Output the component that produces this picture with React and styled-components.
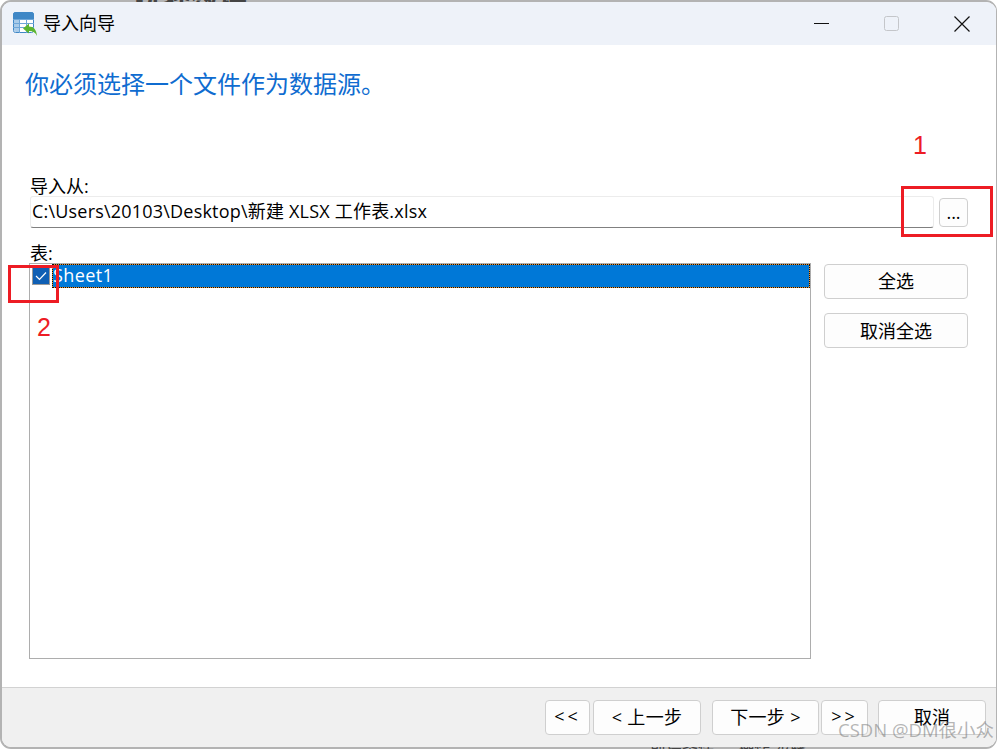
import React from "react";
import styled, { createGlobalStyle } from "styled-components";

const GlobalStyle = createGlobalStyle`
	html, body {
		margin: 0;
		padding: 0;
		background: #fff;
	}
	body {
		font-family: "Open Sans", "Noto Sans CJK SC", sans-serif;
		color: #000;
	}
`;

const Page = styled.div`
	position: relative;
	width: 998px;
	height: 749px;
	overflow: hidden;
	background: #fff;
	padding-right: 1px;
	box-sizing: border-box;
`;

// strips of the page behind the dialog, only a sliver of its text shows
const BehindStrip = styled.div`
	position: absolute;
	left: ${(props) => props.$left}px;
	top: ${(props) => props.$top}px;
	height: 2px;
	overflow: hidden;
	white-space: nowrap;
	font-size: ${(props) => props.$size}px;
	line-height: 2px;
	font-weight: ${(props) => props.$weight};
	color: #444;
`;

const Window = styled.div`
	position: relative;
	height: 749px;
	box-sizing: border-box;
	border: 2px solid #b3b3b3;
	border-right-width: 1px;
	border-radius: 11px;
	background: #fff;
	overflow: hidden;
	display: flex;
	flex-direction: column;
`;

const TitleBar = styled.div`
	height: 43px;
	flex: none;
	background: #eef2f9;
	display: flex;
	align-items: center;
	padding-left: 11px;
`;

const TitleText = styled.span`
	margin-left: 6px;
	font-size: 18px;
	line-height: 43px;
`;

const Controls = styled.div`
	margin-left: auto;
	display: flex;
	align-items: center;
	padding-right: 26px;
	gap: 55px;
`;

const Body = styled.div`
	flex: 1;
	display: flex;
	flex-direction: column;
	padding: 0 28px;
	min-height: 0;
`;

const Heading = styled.h1`
	margin: 22px 0 0 -5px;
	font-size: 24px;
	line-height: 34px;
	font-weight: 400;
	color: #0f6cd0;
`;

const Label = styled.div`
	font-size: 18px;
	line-height: 20px;
`;

const SourceLabel = styled(Label)`
	margin-top: 75px;
`;

const TableLabel = styled(Label)`
	margin-top: 15px;
`;

const FileRow = styled.div`
	display: flex;
	align-items: center;
	gap: 5px;
`;

const FileInput = styled.div`
	flex: 1;
	height: 32px;
	box-sizing: border-box;
	border: 1px solid #ececec;
	border-bottom: 1px solid #808080;
	border-radius: 3px;
	padding-left: 1px;
	font-size: 18px;
	line-height: 29px;
	letter-spacing: 0.2px;
	white-space: nowrap;
`;

const Button = styled.div`
	box-sizing: border-box;
	width: ${(props) => props.$width}px;
	height: ${(props) => props.$height || 35}px;
	flex: none;
	border: 1px solid #cfcfcf;
	border-radius: 4px;
	background: #fdfdfd;
	padding-bottom: ${(props) => props.$lift || 0}px;
	display: flex;
	align-items: center;
	justify-content: center;
	font-size: 18px;
	white-space: pre;
	letter-spacing: ${(props) => props.$spacing || 0}px;
`;

const TableArea = styled.div`
	display: flex;
	align-items: flex-start;
	gap: 13px;
	margin-left: -1px;
`;

const SheetList = styled.div`
	width: 782px;
	height: 396px;
	box-sizing: border-box;
	border: 1px solid #adadad;
`;

const SheetRow = styled.div`
	display: flex;
	align-items: flex-start;
	height: 24px;
`;

const CheckBox = styled.div`
	width: 18px;
	height: 18px;
	margin: 3px 0 0 2px;
	flex: none;
	box-sizing: border-box;
	border: 1px solid #9a9a9a;
	background: #0f5fb4;
	display: flex;
	align-items: center;
	justify-content: center;
`;

const SheetName = styled.div`
	flex: 1;
	margin-left: 2px;
	height: 24px;
	box-sizing: border-box;
	border: 1px dotted #111;
	background: linear-gradient(#0078d7, #0078d7) padding-box, #e8912d border-box;
	color: #fff;
	font-size: 18px;
	line-height: 21px;
	letter-spacing: 0.4px;
`;

const SideButtons = styled.div`
	display: flex;
	flex-direction: column;
	gap: 14px;
	padding-top: 1px;
`;

const Footer = styled.div`
	height: 60px;
	flex: none;
	box-sizing: border-box;
	background: #f0f0f0;
	border-top: 1px solid #d2d2d2;
	display: flex;
	align-items: flex-start;
	justify-content: flex-end;
	padding: 12px 10px 0 0;
`;

const FooterButton = styled(Button)`
	margin-left: ${(props) => props.$gap}px;
`;

const RedBox = styled.div`
	position: absolute;
	left: ${(props) => props.$left}px;
	top: ${(props) => props.$top}px;
	width: ${(props) => props.$width}px;
	height: ${(props) => props.$height}px;
	box-sizing: border-box;
	border: 3px solid #ed1c24;
`;

const RedNumber = styled.div`
	position: absolute;
	left: ${(props) => props.$left}px;
	top: ${(props) => props.$top}px;
	font-family: "Liberation Sans", sans-serif;
	font-size: 25px;
	line-height: 28px;
	color: #ed1c24;
`;

const Watermark = styled.div`
	position: absolute;
	left: 838px;
	top: 718px;
	font-size: 18.5px;
	line-height: 24px;
	color: rgba(120, 120, 120, 0.55);
	white-space: nowrap;
`;

function AppIcon() {
	return (
		<svg width="24" height="24" viewBox="0 0 24 24">
			<rect x="0.5" y="0.5" width="20" height="20" rx="2" fill="#fff" stroke="#3f87c6" />
			<path d="M0 3a3 3 0 0 1 3-3h15a3 3 0 0 1 3 3v4H0z" fill="#3f87c6" />
			<path d="M1 7h5v13H3a2 2 0 0 1-2-2z" fill="#a9cbe9" />
			<path d="M0 7.500h21M0 11.500h21M0 15.500h21M6.500 7v14M13.500 7v14" stroke="#6ea6d8" strokeWidth="1" />
			<path d="M10 16.500l6-5v3c4.500 0 7.500 3 8 9.500-1.500-3.500-4-5-8-5v2.500z" fill="#5cb531" />
		</svg>
	);
}

function MinimizeIcon() {
	return (
		<svg width="15" height="15" viewBox="0 0 15 15">
			<path d="M0 7.500h15" stroke="#111" strokeWidth="1" />
		</svg>
	);
}

function MaximizeIcon() {
	return (
		<svg width="15" height="15" viewBox="0 0 15 15">
			<rect x="0.500" y="0.500" width="14" height="14" rx="2" fill="none" stroke="#c4c6ca" />
		</svg>
	);
}

function CloseIcon() {
	return (
		<svg width="16" height="16" viewBox="0 0 16 16">
			<path d="M0.500 0.500l15 15M15.500 0.500l-15 15" stroke="#111" strokeWidth="1.200" />
		</svg>
	);
}

function CheckIcon() {
	return (
		<svg width="12" height="10" viewBox="0 0 12 10">
			<path d="M1 5l3.500 3.500L11 1.500" fill="none" stroke="#fff" strokeWidth="1.200" />
		</svg>
	);
}

export default function App() {
	return (
		<Page>
			<GlobalStyle />
			<Window>
				<TitleBar>
					<AppIcon />
					<TitleText>导入向导</TitleText>
					<Controls>
						<MinimizeIcon />
						<MaximizeIcon />
						<CloseIcon />
					</Controls>
				</TitleBar>
				<Body>
					<Heading>你必须选择一个文件作为数据源。</Heading>
					<SourceLabel>导入从:</SourceLabel>
					<FileRow>
						<FileInput>C:\Users\20103\Desktop\新建 XLSX 工作表.xlsx</FileInput>
						<Button $width={29} $height={29}>...</Button>
					</FileRow>
					<TableLabel>表:</TableLabel>
					<TableArea>
						<SheetList>
							<SheetRow>
								<CheckBox>
									<CheckIcon />
								</CheckBox>
								<SheetName>Sheet1</SheetName>
							</SheetRow>
						</SheetList>
						<SideButtons>
							<Button $width={144} $lift={3}>全选</Button>
							<Button $width={144} $lift={2}>取消全选</Button>
						</SideButtons>
					</TableArea>
				</Body>
				<Footer>
					<FooterButton $width={45} $gap={0} $spacing={3} $lift={3}>{"<<"}</FooterButton>
					<FooterButton $width={108} $gap={3} $spacing={0.3} $lift={3}>{"< 上一步"}</FooterButton>
					<FooterButton $width={107} $gap={11} $spacing={0.3} $lift={3}>{"下一步 >"}</FooterButton>
					<FooterButton $width={47} $gap={2} $spacing={3} $lift={3}>{">>"}</FooterButton>
					<FooterButton $width={108} $gap={10} $lift={3}>取消</FooterButton>
				</Footer>
			</Window>
			<BehindStrip $left={135} $top={0} $size={28} $weight={700}>选择数据</BehindStrip>
			<BehindStrip $left={650} $top={747} $size={16} $weight={400}>前提条件 二 操作 步骤</BehindStrip>
			<RedBox $left={901} $top={186} $width={92} $height={51} />
			<RedBox $left={8} $top={265} $width={51} $height={38} />
			<RedNumber $left={913} $top={131}>1</RedNumber>
			<RedNumber $left={37} $top={313}>2</RedNumber>
			<Watermark>CSDN @DM很小众</Watermark>
		</Page>
	);
}
